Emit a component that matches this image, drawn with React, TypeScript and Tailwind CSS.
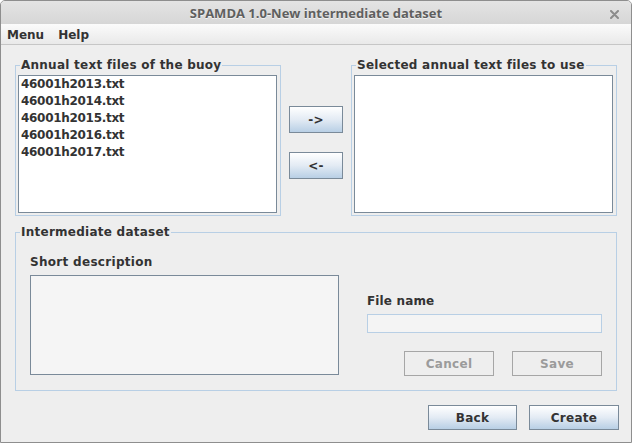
import React from "react";

const files = [
  "46001h2013.txt",
  "46001h2014.txt",
  "46001h2015.txt",
  "46001h2016.txt",
  "46001h2017.txt",
];

function OceanButton({ label, className }: { label: string; className: string }) {
  return (
    <button
      className={
        "flex items-center justify-center border border-[#7a8a99] bg-linear-to-b from-white via-[#e3ebf4] to-[#b8cfe5] text-[#333333] font-bold text-[12px] leading-[14px] tracking-[0.3px] " +
        className
      }
    >
      {label}
    </button>
  );
}

function DisabledButton({ label }: { label: string }) {
  return (
    <button className="flex items-center justify-center w-[90px] h-[25px] border border-[#a6a6a6] bg-[#eeeeee] text-[#9b9b9b] font-bold text-[12px] leading-[14px] tracking-[0.3px]">
      {label}
    </button>
  );
}

export default function App() {
  return (
    <div className="w-[632px] h-[443px] flex flex-col bg-[#eeeeee] border border-[#8e8e8e] rounded-t-[5px] overflow-hidden font-['DejaVu_Sans',sans-serif] text-[12px] leading-[14px] text-[#333333]">
      {/* Title bar */}
      <div className="relative h-[23px] shrink-0 flex items-center justify-center bg-linear-to-b from-[#e4e4e4] to-[#d6d6d6]">
        <span className="font-['Open_Sans',sans-serif] font-bold text-[13px] text-[#5f5f5f] [text-shadow:0_1px_0_#f2f2f2]">
          SPAMDA 1.0-New intermediate dataset
        </span>
        <svg className="absolute right-[12px] top-[9px]" width="9" height="9" viewBox="0 0 9 9">
          <path d="M1 1 L8 8 M8 1 L1 8" stroke="#8c8c8c" strokeWidth="2" strokeLinecap="round" />
        </svg>
      </div>

      {/* Menu bar */}
      <div className="h-[21px] shrink-0 flex items-center pt-[1px] border-b border-[#c6c6c6] bg-linear-to-b from-[#fbfbfb] to-[#e9e9e9] font-bold text-[#333333]">
        <span className="ml-[6px]">Menu</span>
        <span className="ml-[14px]">Help</span>
      </div>

      {/* Content */}
      <div className="flex flex-col px-[14px]">
        {/* Top row */}
        <div className="flex mt-[13px]">
          <fieldset className="w-[266px] h-[158px] border border-[#b8cfe5]">
            <legend className="ml-[4px] px-[1px] font-bold leading-[14px] tracking-[0.25px]">Annual text files of the buoy</legend>
            <div className="ml-[2px] mt-[3px] w-[259px] h-[138px] border border-[#7a8a99] bg-white pl-[2px]">
              {files.map((f) => (
                <div key={f} className="h-[17px] leading-[17px] font-bold tracking-[-0.3px]">
                  {f}
                </div>
              ))}
            </div>
          </fieldset>

          <div className="w-[70px] flex flex-col pl-[8px] pt-[48px] gap-[19px]">
            <OceanButton label="->" className="w-[54px] h-[27px]" />
            <OceanButton label="<-" className="w-[54px] h-[27px]" />
          </div>

          <fieldset className="w-[266px] h-[158px] border border-[#b8cfe5]">
            <legend className="ml-[4px] px-[1px] font-bold leading-[14px] tracking-[0.25px]">Selected annual text files to use</legend>
            <div className="ml-[2px] mt-[3px] w-[259px] h-[138px] border border-[#7a8a99] bg-white"></div>
          </fieldset>
        </div>

        {/* Intermediate dataset */}
        <fieldset className="mt-[9px] w-[602px] h-[166px] border border-[#b8cfe5]">
          <legend className="ml-[4px] px-[1px] font-bold leading-[14px] tracking-[0.25px]">Intermediate dataset</legend>
          <div className="flex">
            <div className="ml-[14px] flex flex-col">
              <div className="mt-[16px] font-bold tracking-[0.3px]">Short description</div>
              <div className="mt-[6px] w-[309px] h-[100px] border border-[#7a8a99] bg-[#f5f5f5]"></div>
            </div>
            <div className="ml-[28px] w-[235px] flex flex-col">
              <div className="mt-[55px] font-bold tracking-[0.15px]">File name</div>
              <div className="mt-[6px] w-[235px] h-[19px] border border-[#b8cfe5] bg-[#f4f4f4]"></div>
              <div className="mt-[18px] flex justify-end gap-[18px]">
                <DisabledButton label="Cancel" />
                <DisabledButton label="Save" />
              </div>
            </div>
          </div>
        </fieldset>

        {/* Bottom buttons */}
        <div className="mt-[14px] flex justify-end gap-[12px] -mr-[2px]">
          <OceanButton label="Back" className="w-[89px] h-[25px]" />
          <OceanButton label="Create" className="w-[90px] h-[25px]" />
        </div>
      </div>
    </div>
  );
}
